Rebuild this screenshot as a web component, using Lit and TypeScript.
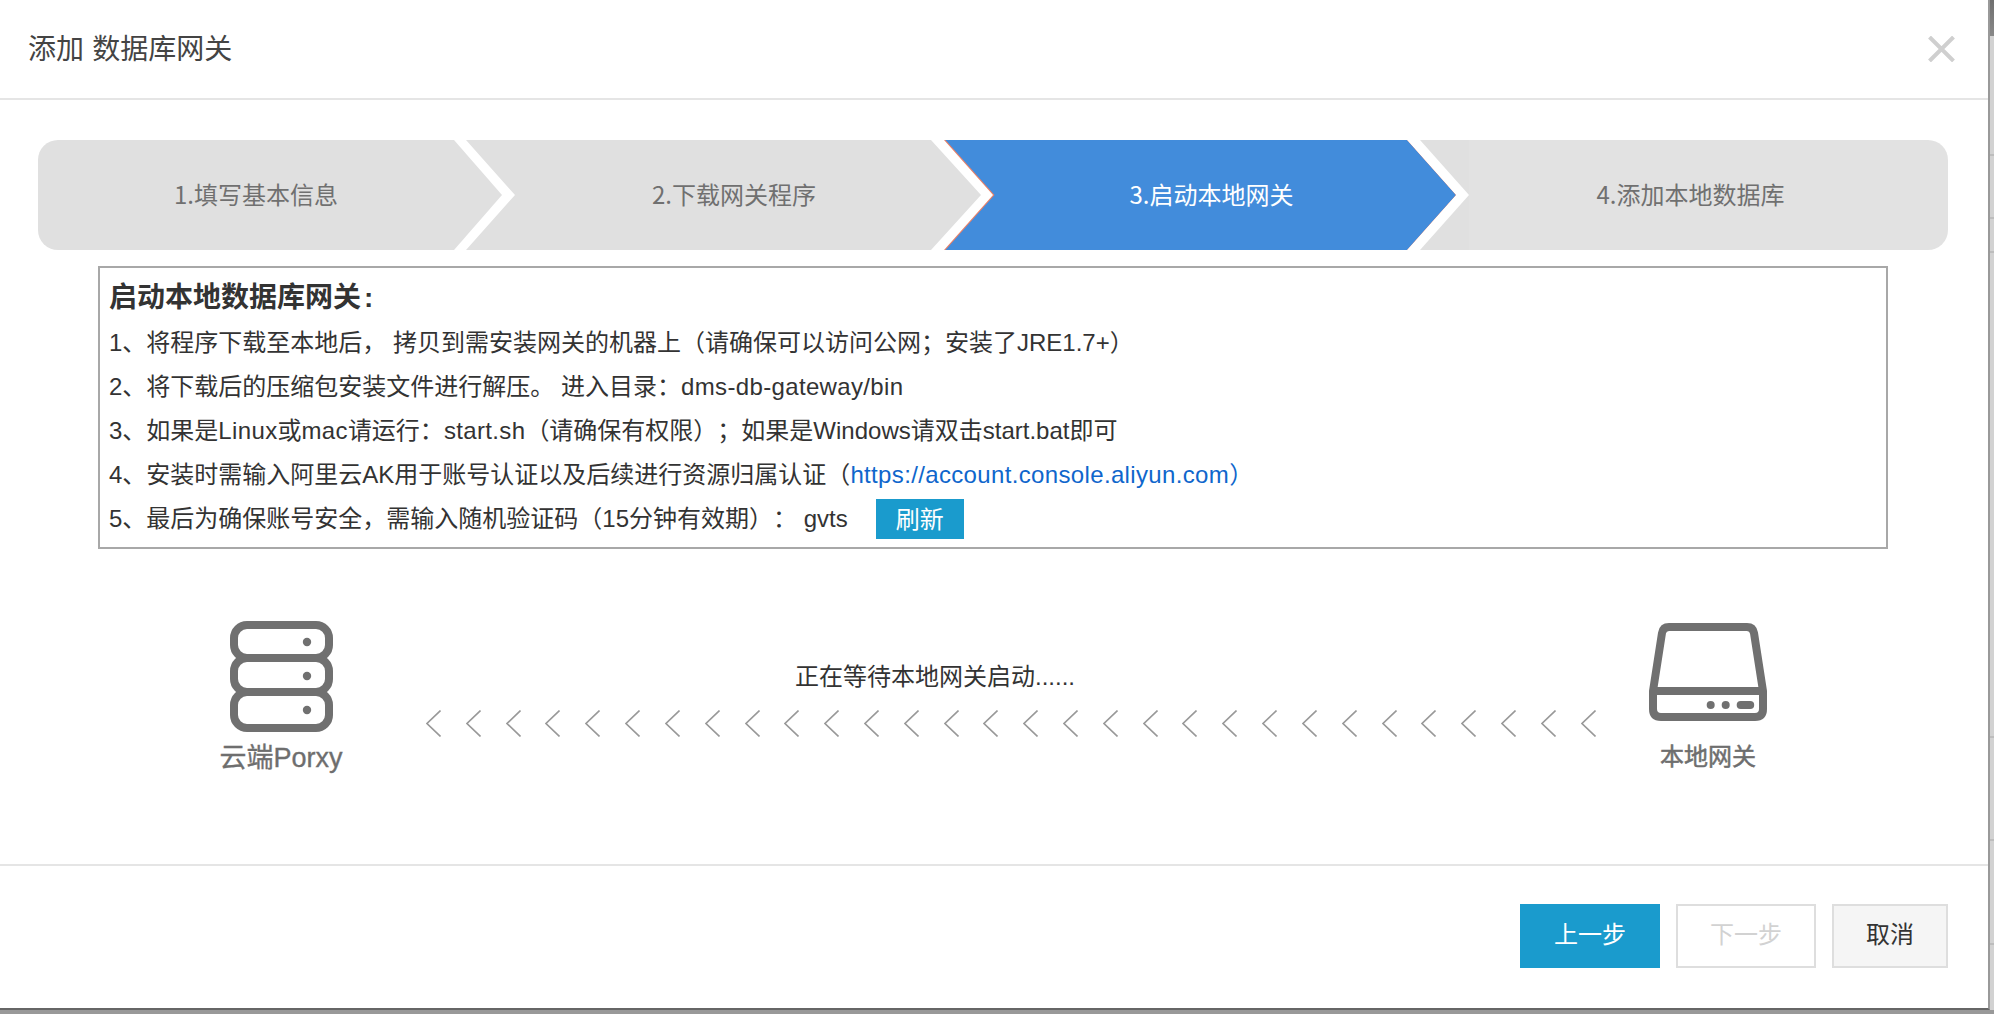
import { LitElement, html, css } from "lit";
import { customElement } from "lit/decorators.js";

@customElement("app-root")
export class AppRoot extends LitElement {
  static styles = css`
    :host { display: block; font-family: "Liberation Sans", "Noto Sans CJK SC", sans-serif; color: #333; text-spacing-trim: space-all; }
    * { box-sizing: border-box; }
    .page { height: 1014px; width: 1994px; background: #999; overflow: hidden; }
    .main { display: flex; height: 1010px; }
    .dialog { width: 1990px; height: 1010px; background: #fff; border-right: 2px solid #999; border-bottom: 2px solid #666; display: flex; flex-direction: column; }
    .strip { width: 4px; background: #d2d2d2; overflow: hidden; display: flex; flex-direction: column; }
    .strip .top { height: 36px; background: linear-gradient(#6f6f6f, #888); flex: none; }
    .strip .seg { border-bottom: 2px solid #bdbdbd; flex: none; }
    .s1 { height: 120px; } .s2 { height: 63px; } .s3 { height: 34px; } .s4 { height: 485px; } .s5 { height: 103px; } .s6 { height: 104px; }
    .strip .glyph { height: 0; display: block; overflow: visible; }

    header { height: 100px; flex: none; border-bottom: 2px solid #e5e5e5; display: flex; align-items: center; justify-content: space-between; padding: 0 33px 0 28px; }
    .title { font: 400 28px/36px "Noto Sans CJK SC", sans-serif; color: #444; word-spacing: 2px; padding-bottom: 4px; }
    .close { width: 27px; height: 26px; display: block; }

    .body { flex: 1; min-height: 0; }
    .steps { display: flex; margin: 40px 0 0 38px; height: 110px; }
    .step { position: relative; height: 110px; display: flex; align-items: center; justify-content: center; font: 400 24px/36px "Noto Sans CJK SC", sans-serif; color: #707070; background: #e0e0e0; padding: 0 28px 2px 49px; margin-left: -36px; }
    .step span { position: relative; }
    .s-first { width: 464px; margin-left: 0; padding-left: 0; border-radius: 20px 0 0 20px; clip-path: polygon(0 0, calc(100% - 48px) 0, 100% 50%, calc(100% - 48px) 100%, 0 100%); }
    .s-mid { width: 515px; clip-path: polygon(0 0, calc(100% - 50px) 0, 100% 50%, calc(100% - 50px) 100%, 0 100%, 49px 50%); }
    .s-active { width: 512px; margin-left: -37px; background: #e8816a; color: #fff; padding-left: 51px; clip-path: polygon(0 0, calc(100% - 49px) 0, 100% 50%, calc(100% - 49px) 100%, 0 100%, 49px 50%); }
    .s-active::before { content: ""; position: absolute; inset: 0; background: #428cdb; clip-path: polygon(1.5px 0, calc(100% - 49px) 0, 100% 50%, calc(100% - 49px) 100%, 1.5px 100%, 50.5px 50%); }
    .s-last { width: 528px; padding-right: 36px; border-radius: 0 20px 20px 0; background: linear-gradient(90deg, #e0e0e0 49px, #e2e2e2 49px); clip-path: polygon(0 0, 100% 0, 100% 100%, 0 100%, 49px 50%); }

    .box { margin: 16px 0 0 98px; width: 1790px; height: 283px; border: 2px solid #a8a8a8; padding: 6px 0 0 9px; }
    .box h3 { margin: 0; font-size: 28px; font-weight: bold; line-height: 47px; color: #333; }
    .box h3 i { font-style: normal; margin-left: 3px; }
    .row { height: 44px; display: flex; align-items: center; font-size: 24px; line-height: 44px; color: #333; white-space: pre; }
    .row a { color: #0f66cc; text-decoration: none; }
    .lat { letter-spacing: .35px; }
    .refresh { margin-left: 28px; width: 88px; height: 40px; background: #1a9bcd; color: #fff; border: 0; padding: 0 0 3px; font: 24px/36px "Noto Sans CJK SC", sans-serif; }

    .transfer { display: flex; padding-left: 221px; }
    .node { display: flex; flex-direction: column; align-items: center; flex: none; color: #6e6e6e; }
    .cloud { width: 120px; margin-top: 72px; gap: 8px; }
    .cloud svg { width: 103px; height: 111px; display: block; }
    .cloud .label { font-size: 27px; line-height: 36px; white-space: nowrap; -webkit-text-stroke: .35px #6e6e6e; }
    .local { width: 118px; margin: 74px 0 0 53px; gap: 16px; }
    .local svg { width: 118px; height: 98px; display: block; }
    .local .label { font: 400 24px/36px "Noto Sans CJK SC", sans-serif; white-space: nowrap; -webkit-text-stroke: .5px #6e6e6e; }
    .mid { width: 1170px; margin: 110px 0 0 85px; flex: none; }
    .status { padding-left: 369px; font-size: 24px; line-height: 36px; color: #333; white-space: nowrap; }
    .chevrons { display: flex; justify-content: space-between; margin-top: 15px; }
    .chevrons svg { width: 15px; height: 27px; display: block; }

    footer { height: 144px; flex: none; border-top: 2px solid #e5e5e5; display: flex; justify-content: flex-end; gap: 16px; padding: 38px 40px 0 0; }
    .btn { height: 64px; font: 24px/34px "Noto Sans CJK SC", sans-serif; padding: 0 0 6px; }
    .b-prev { width: 140px; background: #1a9bcd; color: #fff; border: 0; }
    .b-next { width: 140px; background: #fff; color: #d2d2d2; border: 2px solid #dedede; }
    .b-cancel { width: 116px; background: #f5f5f5; color: #333; border: 2px solid #dedede; }
  `;

  render() {
    const chevrons = Array.from({ length: 30 }, () => html`<svg viewBox="0 0 15 27"><path d="M14.5 .5 1 13.5 14.5 26.5" fill="none" stroke="#999" stroke-width="1.6"/></svg>`);
    return html`
      <div class="page">
        <div class="main">
          <div class="dialog">
            <header>
              <div class="title">添加 数据库网关</div>
              <svg class="close" viewBox="0 0 27 26"><path d="M1.5 1 25.5 25M25.5 1 1.5 25" stroke="#cfcfcf" stroke-width="4" fill="none"/></svg>
            </header>
            <div class="body">
              <div class="steps">
                <div class="step s-first"><span>1.填写基本信息</span></div>
                <div class="step s-mid"><span>2.下载网关程序</span></div>
                <div class="step s-active"><span>3.启动本地网关</span></div>
                <div class="step s-last"><span>4.添加本地数据库</span></div>
              </div>
              <div class="box">
                <h3>启动本地数据库网关<i>:</i></h3>
                <div class="row">1、将程序下载至本地后， 拷贝到需安装网关的机器上（请确保可以访问公网；安装了JRE1.7+）</div>
                <div class="row"><span>2、将下载后的压缩包安装文件进行解压。 进入目录：<span class="lat">dms-db-gateway/bin</span></span></div>
                <div class="row"><span>3、如果是<span class="lat">Linux</span>或<span class="lat">mac</span>请运行：<span class="lat">start.sh</span>（请确保有权限）；如果是Windows请双击start.bat即可</span></div>
                <div class="row"><span>4、安装时需输入阿里云AK用于账号认证以及后续进行资源归属认证（<a class="lat" href="#">https://account.console.aliyun.com）</a></span></div>
                <div class="row"><span>5、最后为确保账号安全，需输入随机验证码（15分钟有效期）： gvts</span><button class="refresh">刷新</button></div>
              </div>
              <div class="transfer">
                <div class="node cloud">
                  <svg viewBox="0 0 103 111" fill="none" stroke="#707070" stroke-width="8">
                    <rect x="4" y="4" width="95" height="33" rx="13"/>
                    <rect x="4" y="37" width="95" height="34" rx="13"/>
                    <rect x="4" y="71" width="95" height="36" rx="13"/>
                    <g fill="#707070" stroke="none"><circle cx="77" cy="21" r="4.2"/><circle cx="77" cy="55" r="4.2"/><circle cx="77" cy="89" r="4.2"/></g>
                  </svg>
                  <div class="label">云端Porxy</div>
                </div>
                <div class="mid">
                  <div class="status">正在等待本地网关启动......</div>
                  <div class="chevrons">${chevrons}</div>
                </div>
                <div class="node local">
                  <svg viewBox="0 0 118 98" fill="none" stroke="#707070" stroke-width="8">
                    <path d="M4 68 13 10Q14 4 20 4H98Q104 4 105 10L114 68V86Q114 94 106 94H12Q4 94 4 86ZM4 68H114" stroke-linejoin="round"/>
                    <g fill="#707070" stroke="none"><circle cx="61.7" cy="82" r="4"/><circle cx="76.7" cy="82" r="4"/><rect x="87.7" y="78" width="17.5" height="8" rx="4"/></g>
                  </svg>
                  <div class="label">本地网关</div>
                </div>
              </div>
            </div>
            <footer>
              <button class="btn b-prev">上一步</button>
              <button class="btn b-next">下一步</button>
              <button class="btn b-cancel">取消</button>
            </footer>
          </div>
          <div class="strip">
            <div class="top"></div>
            <div class="seg s1"></div>
            <svg class="glyph" width="4" height="30" viewBox="0 0 4 30"><path d="M5 4Q1 9 1 15T5 26" fill="none" stroke="#888" stroke-width="3"/></svg>
            <div class="seg s2"></div>
            <div class="seg s3"></div>
            <div class="seg s4"></div>
            <div class="seg s5"></div>
            <div class="seg s6"></div>
          </div>
        </div>
      </div>
    `;
  }
}
